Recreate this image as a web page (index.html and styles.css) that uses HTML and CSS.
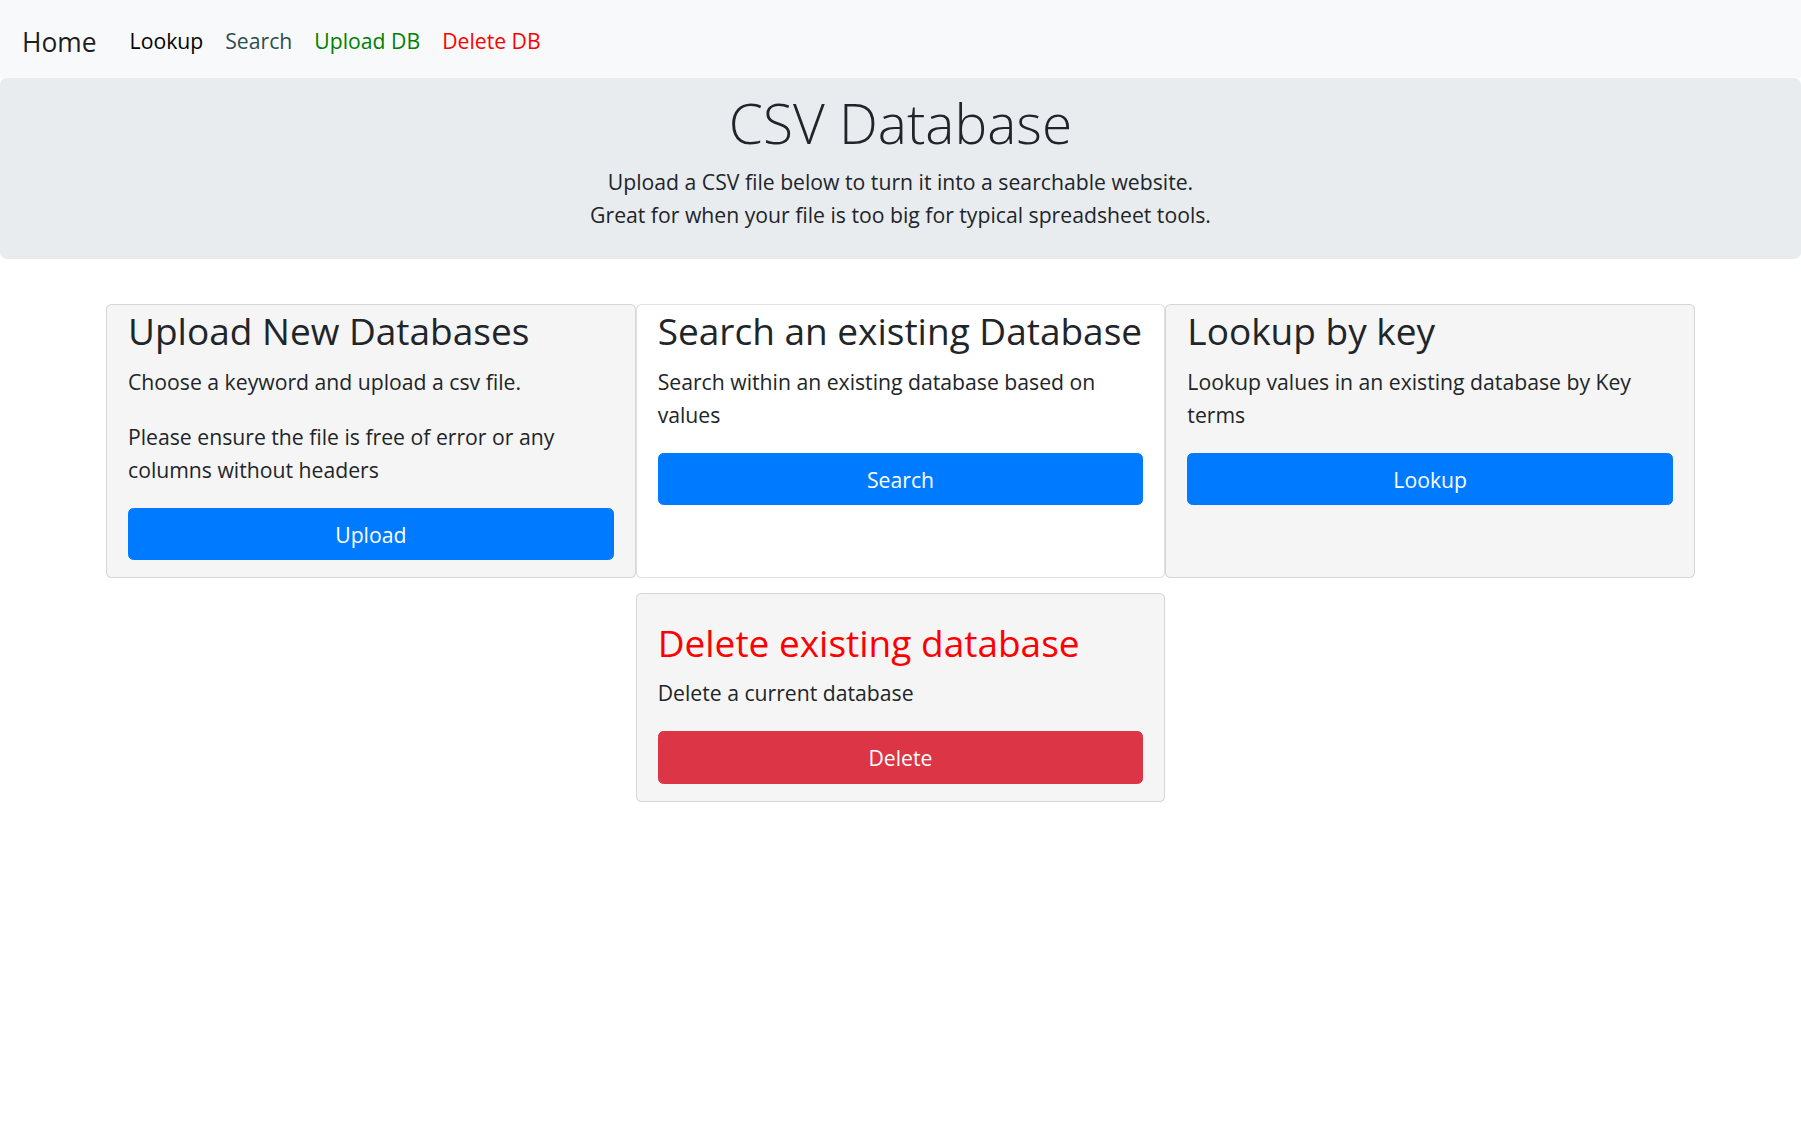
FILE: index.html
```html
<!DOCTYPE html>
<html lang="en">
<head>
<meta charset="utf-8">
<title>CSV Database</title>
<link rel="stylesheet" href="styles.css">
</head>
<body>
<nav class="navbar">
  <a class="brand" href="#">Home</a>
  <a class="nav-link link-lookup" href="#">Lookup</a>
  <a class="nav-link link-search" href="#">Search</a>
  <a class="nav-link link-upload" href="#">Upload DB</a>
  <a class="nav-link link-delete" href="#">Delete DB</a>
</nav>
<header class="jumbotron">
  <h1 class="jumbo-title">CSV Database</h1>
  <p class="jumbo-lead">Upload a CSV file below to turn it into a searchable website.<br>Great for when your file is too big for typical spreadsheet tools.</p>
</header>
<main class="cards">
  <section class="card card-grey">
    <h3 class="card-title">Upload New Databases</h3>
    <p class="card-text">Choose a keyword and upload a csv file.</p>
    <p class="card-text">Please ensure the file is free of error or any columns without headers</p>
    <a class="btn btn-primary" href="#">Upload</a>
  </section>
  <section class="card card-white">
    <h3 class="card-title">Search an existing Database</h3>
    <p class="card-text">Search within an existing database based on values</p>
    <a class="btn btn-primary" href="#">Search</a>
  </section>
  <section class="card card-grey">
    <h3 class="card-title">Lookup by key</h3>
    <p class="card-text">Lookup values in an existing database by Key terms</p>
    <a class="btn btn-primary" href="#">Lookup</a>
  </section>
  <section class="card card-grey card-delete">
    <h3 class="card-title title-danger">Delete existing database</h3>
    <p class="card-text">Delete a current database</p>
    <a class="btn btn-danger" href="#">Delete</a>
  </section>
</main>
</body>
</html>
```
FILE: styles.css
```css
html, body {
  margin: 0;
  padding: 0;
}

body {
  font-family: "Open Sans", "Noto Sans", "DejaVu Sans", sans-serif;
  color: #212529;
  background: #ffffff;
}

a {
  text-decoration: none;
}

/* ---------- navbar ---------- */
.navbar {
  display: flex;
  align-items: flex-start;
  height: 78px;
  box-sizing: border-box;
  padding: 0 22px;
  background: #f8f9fa;
}

.brand {
  font-size: 26.4px;
  line-height: 40px;
  padding-top: 21.5px;
  margin-right: 22px;
  color: rgba(0, 0, 0, 0.9);
}

.nav-link {
  font-size: 21.2px;
  line-height: 33px;
  padding: 23.6px 11px 0;
}

.link-lookup { color: #000000; }
.link-search { color: #2f4f4f; }
.link-upload { color: #008000; }
.link-delete { color: #ff0000; }

/* ---------- jumbotron ---------- */
.jumbotron {
  height: 181px;
  box-sizing: border-box;
  padding: 11.5px 0 0;
  background: #e9ecef;
  border-radius: 6.6px;
  text-align: center;
}

.jumbo-title {
  margin: 0;
  font-size: 55px;
  font-weight: 300;
  line-height: 66px;
  color: #212529;
}

.jumbo-lead {
  margin: 9.5px 0 0;
  font-size: 21.2px;
  line-height: 33px;
}

/* ---------- cards ---------- */
.cards {
  display: grid;
  grid-template-columns: repeat(3, 1fr);
  row-gap: 15px;
  width: 1589px;
  margin: 45px auto 0;
}

.card {
  display: flex;
  flex-direction: column;
  box-sizing: border-box;
  padding: 3.5px 21px 17px;
  border: 1px solid rgba(0, 0, 0, 0.125);
  border-radius: 5.5px;
}

.card-grey { background: #f5f5f5; }
.card-white { background: #ffffff; }

.card-delete {
  grid-column: 2;
  padding-top: 26.5px;
}

.card-title {
  margin: 0 0 12px;
  font-size: 37px;
  font-weight: 400;
  line-height: 44.4px;
  color: #212529;
}

.card-delete .card-title {
  margin-bottom: 11px;
}

.title-danger {
  color: #ff0000;
}

.card-text {
  margin: 0 0 22px;
  font-size: 21.2px;
  line-height: 33px;
}

.btn {
  display: block;
  box-sizing: border-box;
  width: 100%;
  padding: 8.7px 12px;
  border: 1px solid transparent;
  border-radius: 5.5px;
  font-size: 21.2px;
  line-height: 33px;
  text-align: center;
  color: #ffffff;
}

.btn-primary {
  background: #007bff;
  border-color: #007bff;
}

.btn-danger {
  background: #dc3545;
  border-color: #dc3545;
}
```
